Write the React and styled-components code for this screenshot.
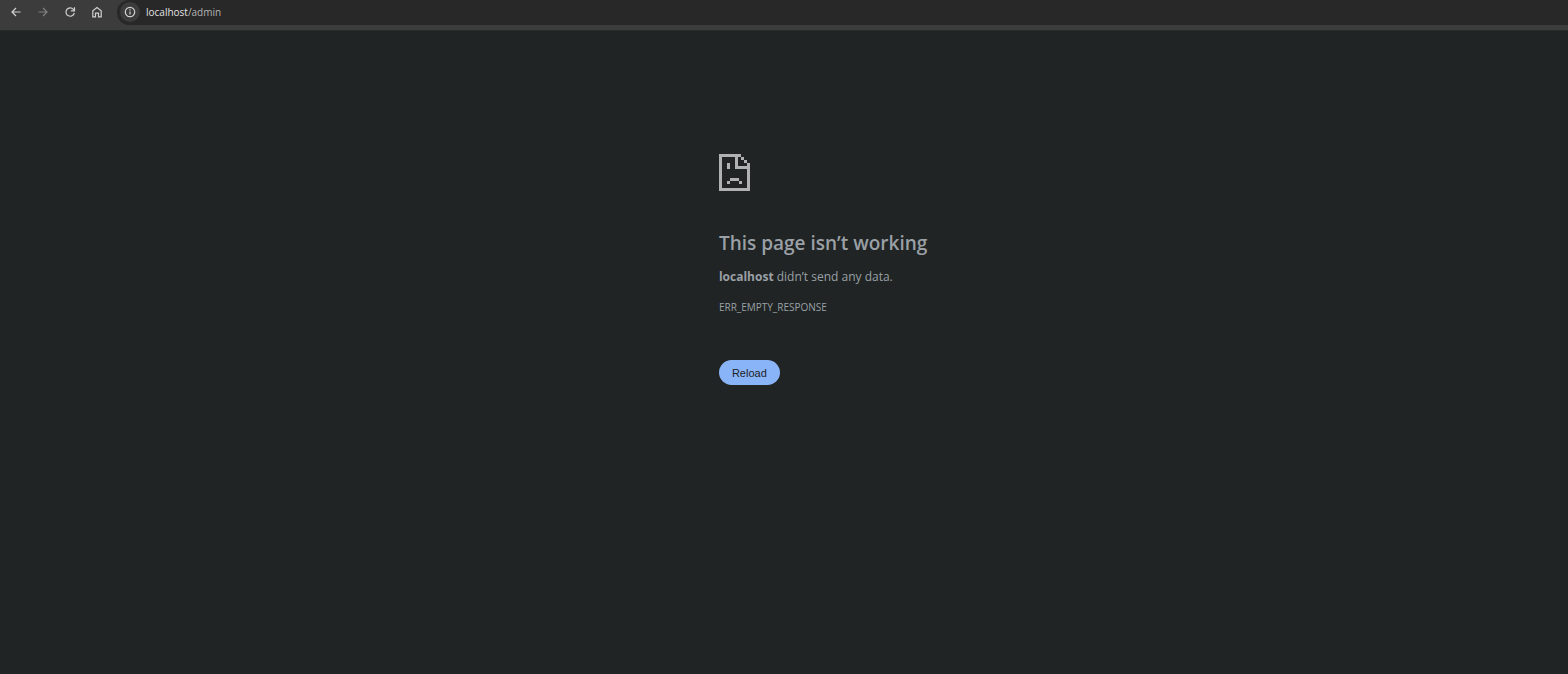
import React from 'react'
import styled, { createGlobalStyle } from 'styled-components'


function App() {

    return (
        <Container>
            <GlobalStyle />

            <Toolbar>
                <NavButtons>
                    <NavButton aria-label='Back'>
                        <BackIcon />
                    </NavButton>
                    <NavButton aria-label='Forward' disabled>
                        <ForwardIcon />
                    </NavButton>
                    <NavButton aria-label='Reload page'>
                        <ReloadIcon />
                    </NavButton>
                    <NavButton aria-label='Home'>
                        <HomeIcon />
                    </NavButton>
                </NavButtons>

                <AddressBar>
                    <SiteInfo aria-label='Site information'>
                        <InfoIcon />
                    </SiteInfo>
                    <Url><UrlHost>localhost</UrlHost>/admin</Url>
                </AddressBar>
            </Toolbar>

            <ErrorPage>
                <SadPageIcon />
                <Title>This page isn’t working</Title>
                <Message><b>localhost</b> didn’t send any data.</Message>
                <ErrorCode>ERR_EMPTY_RESPONSE</ErrorCode>
                <ReloadButton>Reload</ReloadButton>
            </ErrorPage>
        </Container>
    )
}

export default App

function BackIcon() {
    return (
        <Icon viewBox='0 0 12 12'>
            <path d='M10.5 6H2M6 2L2 6l4 4' />
        </Icon>
    )
}

function ForwardIcon() {
    return (
        <Icon viewBox='0 0 12 12'>
            <path d='M1.5 6H10M6 2l4 4-4 4' />
        </Icon>
    )
}

function ReloadIcon() {
    return (
        <Icon viewBox='0 0 12 12'>
            <path d='M10.3 7A4.2 4.2 0 1 1 9.4 3.3L10.4 4.6' />
            <path d='M10.5 1.3v3.6H6.9' />
        </Icon>
    )
}

function HomeIcon() {
    return (
        <Icon viewBox='0 0 12 12'>
            <path d='M1.8 10.9V4.8L6 1.6l4.2 3.2v6.1H7.5V7.2h-3v3.7z' />
        </Icon>
    )
}

function InfoIcon() {
    return (
        <Icon viewBox='0 0 12 12'>
            <circle cx='6' cy='6' r='4.7' />
            <path d='M6 5.4v3.2M6 3.3v1.3' />
        </Icon>
    )
}

function SadPageIcon() {
    return (
        <PageIcon viewBox='0 0 31 37' aria-hidden='true'>
            {/* outline */}
            <path d='M0 0h22v3H3v31h25V9h3v28H0z' />
            {/* folded corner */}
            <path d='M16 3h3v9h9v3H16zM22 3h3v3h-3zM25 6h3v3h-3z' />
            {/* face */}
            <path d='M8 9h3v6H8zM11 24h9v3h-9zM8 27h3v3H8zM20 27h3v3h-3z' />
        </PageIcon>
    )
}

const GlobalStyle = createGlobalStyle`
body {
    margin: 0;
    background-color: #202424;
}
`

const Container = styled.div`
min-height: 100vh;
background-color: #202424;
font-family: 'Open Sans', 'Noto Sans', sans-serif;
color: #9aa0a6;
`

const Toolbar = styled.header`
display: flex;
height: 25px;
padding-bottom: 5px;
border-bottom: 1px solid #292b2b;
background-color: #3c3c3c;
`

const NavButtons = styled.nav`
display: flex;
align-items: center;
height: 24px;
gap: 7px;
padding: 0 10px 0 6px;
`

const NavButton = styled.button`
display: flex;
align-items: center;
justify-content: center;
width: 20px;
height: 20px;
padding: 0;
border: 0;
border-radius: 50%;
background: none;
color: #d0d0d0;
cursor: pointer;
&:disabled {
    color: #808080;
    cursor: default;
}
`

const AddressBar = styled.div`
display: flex;
align-items: center;
flex-grow: 1;
gap: 6px;
padding: 0 0 1px 3px;
border-radius: 12px 0 0 12px;
background-color: #282828;
`

const SiteInfo = styled(NavButton)`
background-color: #3c3c3c;
`

const Url = styled.span`
font-size: 10px;
color: #b4b4b4;
`

const UrlHost = styled.span`
color: #e3e3e3;
`

const Icon = styled.svg`
width: 12px;
height: 12px;
fill: none;
stroke: currentColor;
stroke-width: 1.2;
`

const ErrorPage = styled.main`
display: flex;
flex-direction: column;
align-items: flex-start;
margin-left: 45.85%;
padding: 123px 24px 24px 0;
`

const PageIcon = styled.svg`
width: 31px;
height: 37px;
fill: #b0b2b2;
`

const Title = styled.h1`
margin: 38px 0 0;
font-size: 19px;
font-weight: 600;
line-height: 28px;
`

const Message = styled.p`
margin: 10px 0 0;
font-size: 12px;
line-height: 20px;
`

const ErrorCode = styled.div`
margin-top: 12px;
font-size: 10px;
line-height: 16px;
`

const ReloadButton = styled.button`
height: 25px;
margin-top: 45px;
padding: 0 13px;
border: 0;
border-radius: 13px;
background-color: #8ab4f8;
color: #202124;
font-family: 'Liberation Sans', Arial, sans-serif;
font-size: 11px;
cursor: pointer;
`
